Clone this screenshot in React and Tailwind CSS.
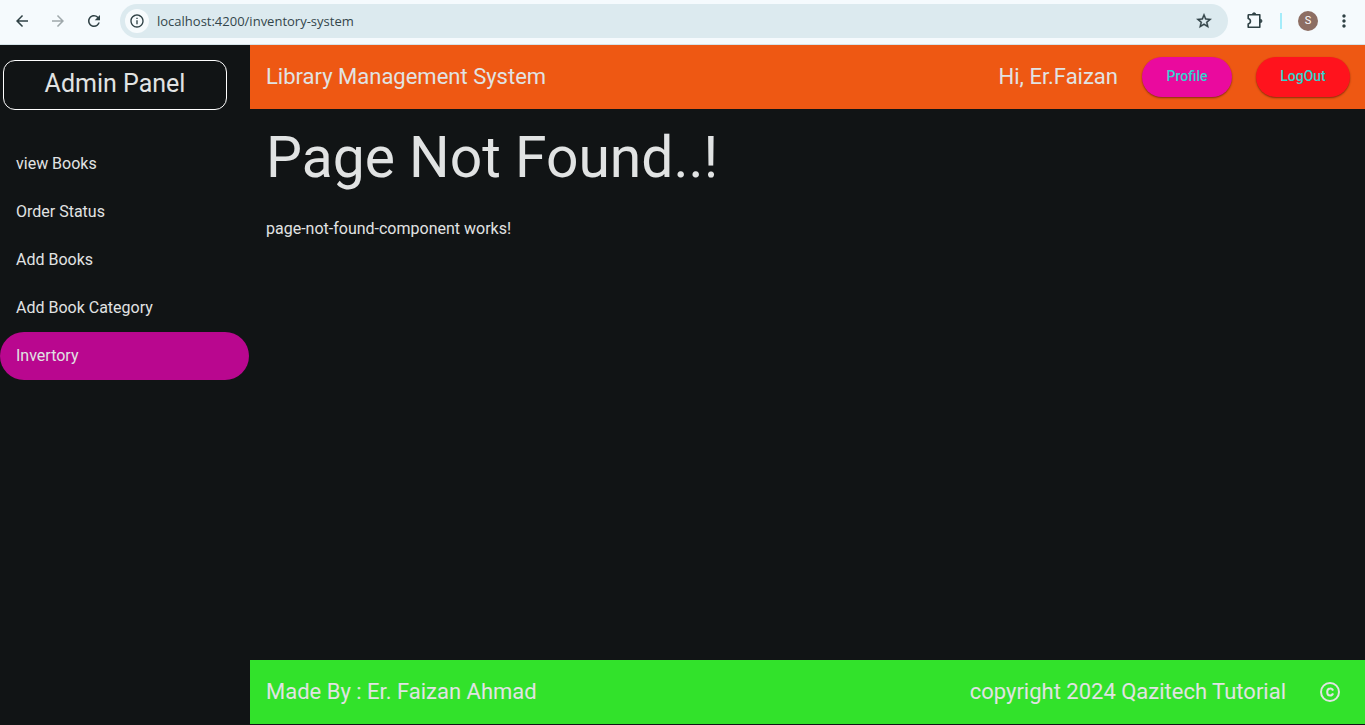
import { MdArrowBack, MdArrowForward, MdRefresh, MdOutlineInfo, MdMoreVert } from "react-icons/md";

const links = ["view Books", "Order Status", "Add Books", "Add Book Category", "Invertory"];

function StarIcon() {
  return (
    <svg viewBox="0 0 24 24" className="size-[18px]" fill="currentColor" stroke="currentColor" strokeWidth="0.5">
      <path d="M22 9.24l-7.19-.62L12 2 9.19 8.63 2 9.24l5.46 4.73L5.82 21 12 17.27 18.18 21l-1.63-7.03L22 9.24zM12 15.4l-3.76 2.27 1-4.28-3.32-2.88 4.38-.38L12 6.1l1.71 4.04 4.38.38-3.32 2.88 1 4.28L12 15.4z" />
    </svg>
  );
}

function PuzzleIcon() {
  return (
    <svg viewBox="0 0 20 20" className="size-5" fill="none" stroke="currentColor" strokeWidth="1.6" strokeLinejoin="round">
      <path d="M4.800 3.800H15.800V16.200H4.200V13.100C7.200 12.300 7.200 8.200 4.200 7.400V4.400Q4.200 3.800 4.800 3.800Z" />
      <path d="M8.400 3.400A1.700 1.700 0 0 1 11.800 3.400ZM16.300 8.300A1.700 1.700 0 0 1 16.300 11.700Z" fill="currentColor" strokeWidth="0.8" />
    </svg>
  );
}

function CopyrightIcon() {
  return (
    <svg viewBox="0 0 24 24" className="size-6" fill="none" stroke="currentColor">
      <circle cx="12" cy="12" r="9" strokeWidth="2" />
      <path d="M15 10.600A2.900 2.900 0 0 0 12.100 8.500C10.200 8.500 9.200 9.800 9.200 12S10.200 15.500 12.100 15.500A2.900 2.900 0 0 0 15 13.400" strokeWidth="2" />
    </svg>
  );
}

function BrowserBar() {
  return (
    <div className="flex h-[45px] shrink-0 items-center border-b border-[#d5e3e8] bg-[#f5fafd] pb-0.5 text-[#2f4145]">
      <div className="flex shrink-0 items-center gap-4 px-3">
        <button type="button" aria-label="Back" className="flex size-5 items-center justify-center"><MdArrowBack size={18} /></button>
        <button type="button" aria-label="Forward" className="flex size-5 items-center justify-center text-[#9fa8ab]"><MdArrowForward size={18} /></button>
        <button type="button" aria-label="Reload" className="flex size-5 items-center justify-center"><MdRefresh size={18} /></button>
      </div>
      <div className="ml-1 flex h-[34px] min-w-0 grow items-center rounded-full bg-[#dceaef] pr-3 pl-[5px]">
        <button type="button" aria-label="Site information" className="flex size-6 shrink-0 items-center justify-center rounded-full bg-[#f7fbfd]">
          <MdOutlineInfo size={16} />
        </button>
        <input type="text" aria-label="Address" defaultValue="localhost:4200/inventory-system" className="ml-2 min-w-0 grow bg-transparent font-['Open_Sans',sans-serif] text-[13px] leading-5 text-[#33464b] outline-none" />
        <button type="button" aria-label="Bookmark" className="flex size-6 shrink-0 items-center justify-center"><StarIcon /></button>
      </div>
      <div className="flex shrink-0 items-center pr-[11px] pl-4">
        <button type="button" aria-label="Extensions" className="flex size-5 items-center justify-center"><PuzzleIcon /></button>
        <span className="mx-4 h-4 w-0.5 bg-[#a4ecfa]" />
        <button type="button" aria-label="Account" className="flex size-5 items-center justify-center rounded-full bg-[#8d6e63] font-[Roboto,sans-serif] text-[11px] text-white">S</button>
        <button type="button" aria-label="Menu" className="ml-4 flex size-5 items-center justify-center"><MdMoreVert size={20} /></button>
      </div>
    </div>
  );
}

function Sidebar() {
  return (
    <aside className="w-[250px] shrink-0 pt-[15px]">
      <h2 className="mr-[23px] ml-[3px] flex h-[50px] items-center justify-center rounded-xl border border-white pb-0.5 text-[25px] leading-8">Admin Panel</h2>
      <nav className="mt-[30px] mr-px flex flex-col">
        {links.map((name) => (
          <a key={name} href="#" aria-current={name === "Invertory" ? "page" : undefined} className="flex h-12 items-center rounded-full px-4 text-base aria-[current=page]:bg-[#b9078f]">
            {name}
          </a>
        ))}
      </nav>
    </aside>
  );
}

export default function App() {
  return (
    <div className="flex min-h-screen flex-col bg-[#111415] font-[Roboto,sans-serif] text-[#e1e3e3]">
      <BrowserBar />
      <div className="flex grow">
        <Sidebar />
        <div className="flex min-w-0 grow flex-col">
          <header className="flex h-16 items-center bg-[#ee5813] pr-[15px] pl-4 text-[22px] leading-7">
            <h1>Library Management System</h1>
            <span className="ml-auto">Hi, Er.Faizan</span>
            <button type="button" className="ml-6 h-10 w-[90px] rounded-full bg-[#ea0a9e] pb-0.5 text-sm font-medium text-[#32d4cf] shadow-[0_1px_2px_rgba(0,0,0,0.45)]">Profile</button>
            <button type="button" className="ml-6 h-10 w-[94px] rounded-full bg-[#ff131d] pb-0.5 text-sm font-medium text-[#32d4cf] shadow-[0_1px_2px_rgba(0,0,0,0.45)]">LogOut</button>
          </header>
          <main className="grow px-4 pt-[17px]">
            <h2 className="text-[57px] leading-[64px]">Page Not Found..!</h2>
            <p className="mt-[27px] text-base leading-6">page-not-found-component works!</p>
          </main>
          <footer className="mb-px flex h-16 items-center bg-[#32e22b] pr-[11px] pl-4 text-[22px] leading-7">
            <span>Made By : Er. Faizan Ahmad</span>
            <span className="ml-auto">copyright 2024 Qazitech Tutorial</span>
            <button type="button" aria-label="Copyright" className="ml-5 flex size-12 items-center justify-center"><CopyrightIcon /></button>
          </footer>
        </div>
      </div>
    </div>
  );
}
